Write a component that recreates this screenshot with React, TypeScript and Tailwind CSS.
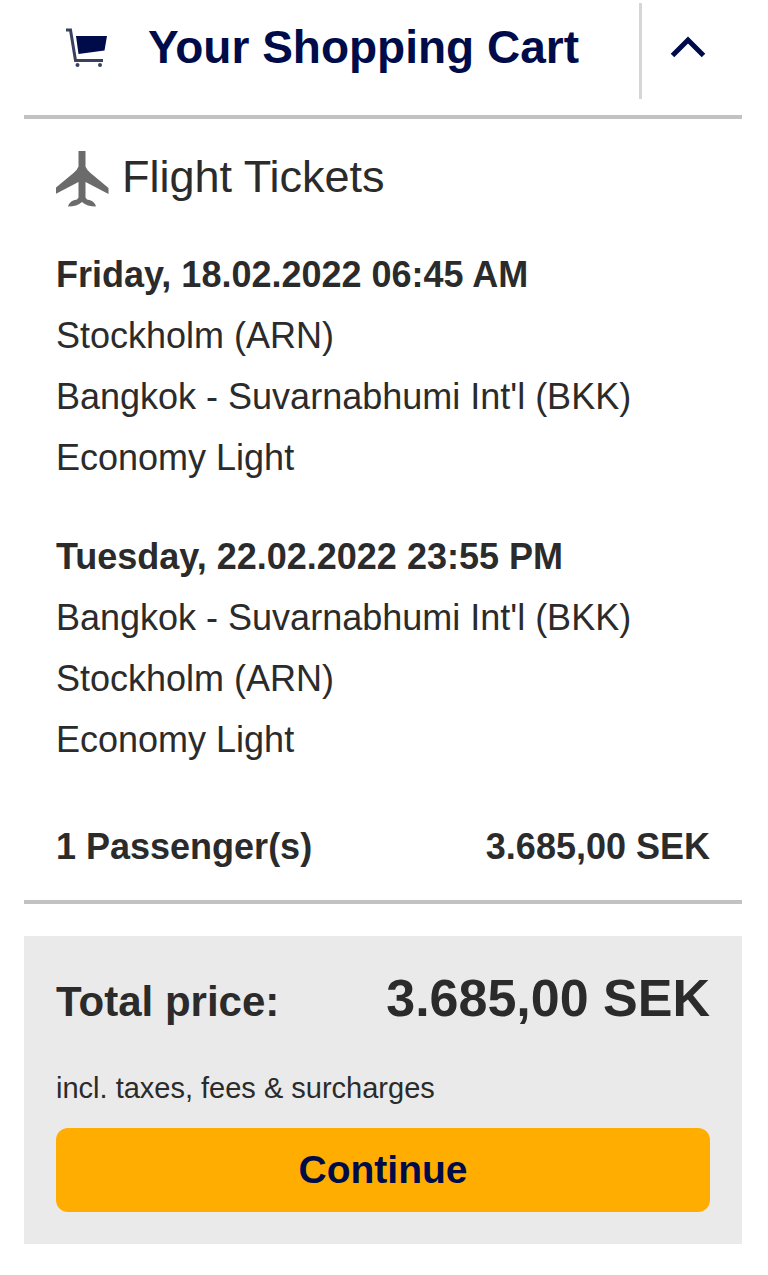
import { useState } from "react";

interface Flight {
  date: string;
  from: string;
  to: string;
  fare: string;
}

const flights: Flight[] = [
  {
    date: "Friday, 18.02.2022 06:45 AM",
    from: "Stockholm (ARN)",
    to: "Bangkok - Suvarnabhumi Int'l (BKK)",
    fare: "Economy Light",
  },
  {
    date: "Tuesday, 22.02.2022 23:55 PM",
    from: "Bangkok - Suvarnabhumi Int'l (BKK)",
    to: "Stockholm (ARN)",
    fare: "Economy Light",
  },
];

const CartIcon = () => (
  <svg className="h-10 w-11 shrink-0" viewBox="0 0 44 40" fill="none" aria-hidden="true">
    <path d="M1 3h4.500l5 30.500h27.500" stroke="#39415f" strokeWidth="3" />
    <path d="M11 9h31l-2.500 14.500L13.500 27z" fill="#000c4a" />
    <circle cx="12.500" cy="38" r="2" fill="#39415f" />
    <circle cx="35" cy="38" r="2" fill="#39415f" />
  </svg>
);

const PlaneIcon = () => (
  <svg className="h-14 w-[54px] shrink-0" viewBox="0 0 54 56" fill="#6b6b6b" aria-hidden="true">
    <path d="M22.500 0h7v15.500q1 3 5 6.500L52.500 37v6L29.500 31v15.500l1.500 2q7 .5 9 7-9 0-14-4.500-5 4.500-14 4.500 2-6.500 9-7l1.500-2V31L-.5 43v-6L17.500 22q4-3.500 5-6.500z" />
  </svg>
);

const ChevronIcon = ({ open }: { open: boolean }) => (
  <svg
    className={open ? "h-6 w-9" : "h-6 w-9 rotate-180"}
    viewBox="0 0 36 24"
    fill="none"
    stroke="#000c4a"
    strokeWidth="5"
    aria-hidden="true"
  >
    <path d="M2.500 20.500L18 5l15.500 15.500" />
  </svg>
);

const FlightDetails = ({ date, from, to, fare }: Flight) => (
  <div className="text-4xl leading-[61px]">
    <h3 className="font-bold">{date}</h3>
    <p>{from}</p>
    <p>{to}</p>
    <p>{fare}</p>
  </div>
);

export default function App() {
  const [open, setOpen] = useState(true);

  return (
    <main className="bg-white pr-[26px] pb-8 pl-6 font-['Liberation_Sans',Arial,sans-serif] text-[#2b2b2b]">
      <header className="flex items-start justify-between border-b-4 border-[#c2c2c2] pt-[3px] pb-4 text-[#000c4a]">
        <div className="flex items-center gap-[39px] pl-[41px]">
          <CartIcon />
          <h1 className="text-[46px] leading-[88px] font-bold">Your Shopping Cart</h1>
        </div>
        <button
          type="button"
          aria-label="Toggle shopping cart"
          aria-expanded={open}
          onClick={() => setOpen(!open)}
          className="flex h-24 items-center border-l-[3px] border-[#d6d6d6] pr-9 pb-2 pl-7"
        >
          <ChevronIcon open={open} />
        </button>
      </header>

      {open && (
        <section className="border-b-4 border-[#c2c2c2] px-8 pt-8 pb-[23px]">
          <div className="flex items-start gap-3">
            <PlaneIcon />
            <h2 className="text-[45px] leading-[52px]">Flight Tickets</h2>
          </div>
          <div className="flex flex-col gap-[38px] pt-[37px]">
            {flights.map((flight) => (
              <FlightDetails key={flight.date} {...flight} />
            ))}
          </div>
          <div className="flex justify-between pt-[46px] text-4xl leading-[61px] font-bold">
            <span>1 Passenger(s)</span>
            <span>3.685,00 SEK</span>
          </div>
        </section>
      )}

      <section className="mt-8 bg-[#eaeaea] px-8 pt-8 pb-8">
        <div className="flex items-baseline justify-between font-bold">
          <span className="text-[42px] leading-[60px]">Total price:</span>
          <span className="text-[52px] leading-[60px]">3.685,00 SEK</span>
        </div>
        <p className="pt-9 pb-5 text-[29px] leading-10">incl. taxes, fees &amp; surcharges</p>
        <button
          type="button"
          className="w-full rounded-xl bg-[#ffad00] py-3 text-[39px] leading-[60px] font-bold text-[#000c4a]"
        >
          Continue
        </button>
      </section>
    </main>
  );
}
